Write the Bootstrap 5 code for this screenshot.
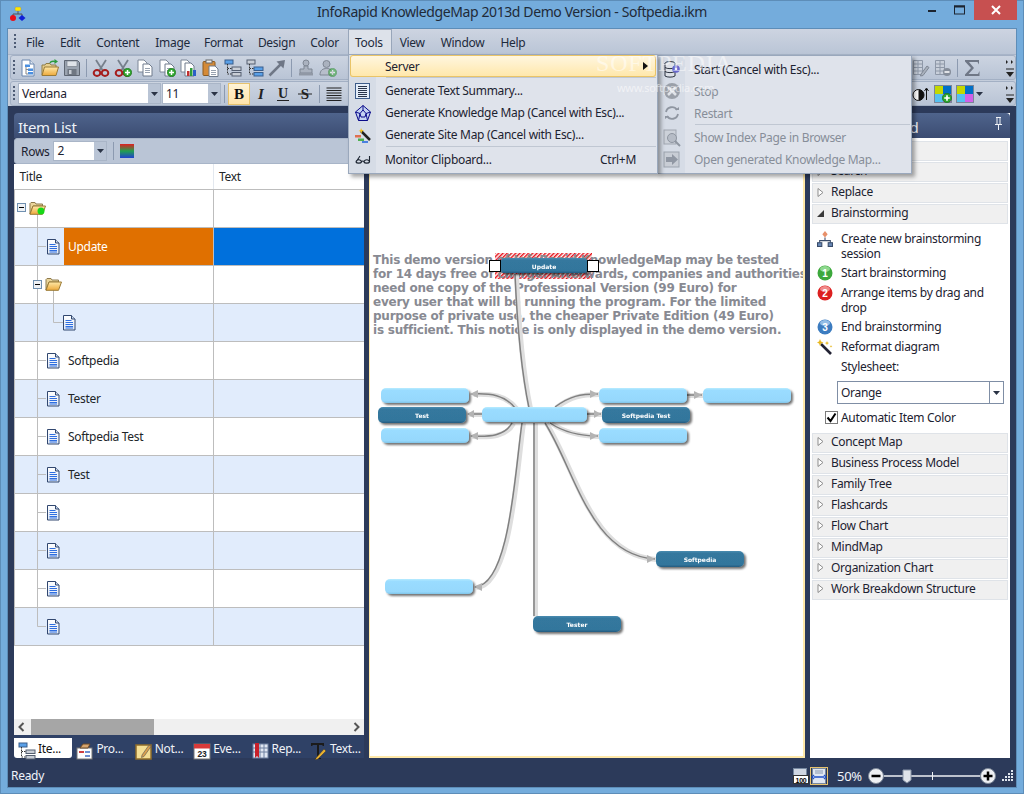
<!DOCTYPE html>
<html lang="en">
<head>
<meta charset="utf-8">
<title>InfoRapid KnowledgeMap</title>
<link href="https://cdn.jsdelivr.net/npm/bootstrap@5.3.0/dist/css/bootstrap.min.css" rel="stylesheet">
<style>
html,body{margin:0;width:1024px;height:794px;overflow:hidden;background:#74acdc}
body{font-family:"Noto Sans","Liberation Sans",sans-serif;font-size:12px;line-height:15px;color:#1c2230;letter-spacing:-.3px}
.appwin{width:1024px;height:794px;background:#74acdc;box-shadow:inset 0 0 0 1px #5d8db8}
.titlerow{height:29px;flex:none;font-size:14px;color:#1f2a38;padding-top:4px;letter-spacing:-.4px}
.appicon{left:9px;top:6px}
.winctl{right:7px;top:0;height:20px}
.winclose{width:43px;height:20px;background:#c75050}
.winbtn{width:28px;height:20px}
.innerwin{margin:0 8px 7px 8px;flex:1;min-height:0;background:#2c3a5a;box-shadow:0 0 0 1px #5d8db8}
.menurow{height:26px;flex:none;background:linear-gradient(#cdd4e1,#bac5d6);padding-left:6px;border-bottom:1px solid #a7b4c8}
.gripdots{width:2px;height:16px;margin-right:2px;flex:none;background:repeating-linear-gradient(#4e5c75 0 2px,transparent 2px 4px)}
.menutext{padding:2px 8px 0;color:#1d2a3c;line-height:22px;height:24px;white-space:nowrap}
.menutext:nth-child(5){margin-right:-2px}
.menutext:nth-child(6),.menutext:nth-child(7){margin-right:-1px}
.menutext.menuopen{background:#dde2ea;box-shadow:0 0 0 1px #98a6ba;margin:0 1px 0 2px;padding-left:6px}
.toolzone{flex:none;background:#c4cddb;padding:0 0 0 2px}
.toolrow{height:25px;background:linear-gradient(#ccd4e1,#b9c4d5);border:1px solid #a3b0c4;border-radius:3px;padding:0 0 0 2px}
.toolrow+.toolrow{margin-top:1px}
.tbtn{width:22px;height:22px;padding:0;border:0;border-radius:0;flex:none;display:flex;align-items:center;justify-content:center;color:#1c2230}
.tbtn svg{display:block}
.tbtn.onbtn{background:linear-gradient(#fff4d8,#ffe3a8);box-shadow:inset 0 0 0 1px #e6c26e}
.tsep{width:1px;height:18px;background:#8c9ab0;margin:0 3px;flex:none}
.rightchev{width:10px;margin-left:22px}
.combo{background:#fff;border:1px solid #a9b5c7;height:21px;line-height:19px;padding-left:3px;flex:none;font-size:12px;position:relative}
.comboarr{position:absolute;right:0;top:0;bottom:0;width:12px;background:#b9c4d5;display:flex;align-items:center;justify-content:center}
.comboarr svg{display:block}
.combofont{width:143px;margin-left:1px}
.combosize{width:59px;margin-left:1px}
.workzone{flex:1;min-height:0;padding:7px 6px 7px 6px;gap:5px}
.leftpane{width:350px;flex:none;min-height:0}
.panehead{height:25px;flex:none;background:linear-gradient(#4f648c,#3b4c72);color:#eef2f8;font-size:15px;line-height:29px;padding-left:4px;border-radius:4px 4px 0 0}
.panetools{height:26px;flex:none;background:#bac5d6;padding-left:6px;gap:3px;border:1px solid #a8b5c8;border-radius:3px}
.combotiny{width:54px;height:20px;line-height:18px;margin-left:1px}
.gridwrap{flex:1;min-height:0;background:#fff}
.treegrid{table-layout:fixed;width:350px;margin:0;font-size:12px}
.treegrid>thead>tr>th{font-weight:400;height:25px;padding:0 0 0 5px;background:#fff;border:0;border-bottom:1px solid #bdbdbd;vertical-align:middle;line-height:25px}
.treegrid>thead>tr>th:first-child{border-right:1px solid #e3e8ef;width:199px;padding-left:5px}
.treegrid>tbody>tr>td{height:38px;padding:0;border:0;border-bottom:1px solid #bdbdbd;background:#fff;box-shadow:none}
.treegrid>tbody>tr>td:first-child{border-right:1px solid #bdbdbd;border-left:1px solid #bdbdbd}
.treegrid>tbody>tr.altrow>td{background:#e1ecfc}
.treegrid>tbody>tr>td.cellblue{background:#0070dc}
.cellbox{height:37px;display:flex;align-items:center}
.cellbox svg{flex:none;display:block}
.cellorange{align-self:stretch;flex:1;background:#e07000;color:#fff;display:flex;align-items:center;padding-left:4px}
.hbar{height:16px;flex:none;background:#f0f0f0}
.hthumb{width:123px;background:#a6a6a6;height:16px;margin-left:1px}
.tabstrip{height:23px;flex:none;background:#2f4166;padding-top:3px}
.tabcell{width:58.4px;height:20px;flex:none;color:#f0f3f8;padding-left:4px;gap:2px;white-space:nowrap;font-size:12px;line-height:21px}
.tabcell.tabon{background:#fff;color:#111;border-radius:0 0 3px 3px}
.midpane{width:436px;flex:none;border-right:2px solid #ffe8a8;border-bottom:2px solid #ffe8a8;border-left:1px solid #ffe8a8;background:#fff;overflow:hidden}
.midpane svg{display:block}
.rightpane{width:200px;flex:none;background:#fff;min-height:0}
.wizhead{height:25px;flex:none;background:linear-gradient(#4f648c,#3b4c72);color:#eef2f8;font-size:15px;line-height:29px;padding:0 7px 0 4px;border-radius:0 4px 0 0}
.wizlist{padding:3px 2px 0 2px}
.wizitem{height:20px;margin-bottom:1px;border:1px solid #dfe3e8;background:#f0f0f0;line-height:18px;padding:0 0 2px 4px;gap:7px;border-radius:0;color:#1c2230}
.wizitem svg{flex:none}
.wizbody{padding:5.500px 0 0 7px;height:207.500px;flex:none}
.wizbody+.wizlist{padding-top:0}
.wizline{gap:8px;padding-right:8px;margin-bottom:4px}
.wizline svg{flex:none}
.wizsub{padding-left:24px;margin-bottom:7.500px;margin-top:3.500px}
.wizcombo{width:167px;height:23px;margin-left:20px;border:1px solid #7f8ea5;display:flex;background:#fff;line-height:21px;padding-left:3px}
.wizcombo span:first-child{flex:1}
.wizarr{width:14px;border-left:1px solid #7f8ea5;display:flex;align-items:center;justify-content:center}
.wizcheck{gap:3px;padding-left:8px;margin-top:6px}
.checkmark{width:13px;height:13px;border:1px solid #7b7b7b;background:#fff;display:flex;flex:none}
.statusrow{height:22px;flex:none;color:#f0f4fa;padding-left:3px;padding-right:2px;line-height:22px}
.stbtn{width:18px;height:18px;display:flex;align-items:center;justify-content:center;flex:none}
.stbtn.onbtn{box-shadow:inset 0 0 0 1px #e6c26e}
.zoompct{width:29px;font-size:13px;margin-left:9px;flex:none}
.toolspop{position:absolute;left:348px;top:54px;width:310px;height:120px;margin:0;padding:0 1px;background:linear-gradient(90deg,#d6dce6 27px,#dfe3eb 27px);border:1px solid #9aa8bc;border-radius:0;box-shadow:3px 3px 4px rgba(0,0,0,.35);display:block;font-size:12px;z-index:5;min-width:0}
.serverpop{position:absolute;left:657px;top:55px;width:255px;height:119px;margin:0;padding:2px 1px 1px;background:linear-gradient(90deg,#d6dce6 27px,#dfe3eb 27px);border:1px solid #9aa8bc;border-radius:0;box-shadow:3px 3px 4px rgba(0,0,0,.35);display:block;font-size:12px;z-index:4;min-width:0}
.popitem{height:22px;padding:0;display:flex;align-items:center;color:#1c2230;background:none;position:relative}
.popitem.hiitem{background:linear-gradient(#fff7e2,#ffe7a9);box-shadow:inset 0 0 0 1px #e9c468;border-radius:3px}
.popitem.offitem{color:#878e99}
.popicon{width:26px;flex:none;display:flex;justify-content:center}
.poptext{padding-left:9px;flex:1;white-space:nowrap}
.popkey{padding-right:20px}
.popsep{height:2.500px;margin:0 0 0 36px;border:0;border-top:1px solid #c0c7d2;opacity:1;background:none}
.wmark{position:absolute;left:596px;top:49px;z-index:6;color:rgba(255,255,255,.5);font-family:"Liberation Serif",serif;font-size:24px;line-height:28px;letter-spacing:.8px;pointer-events:none}
.wmark2{position:absolute;left:617px;top:81px;z-index:6;color:rgba(255,255,255,.55);font-size:11px;line-height:14px;pointer-events:none}
.maptext{font-family:"DejaVu Sans",Verdana,sans-serif;font-weight:700;font-size:12px;fill:#888a92;letter-spacing:-.23px}
.nodelabel{font-family:"DejaVu Sans",sans-serif;font-weight:700;font-size:6px;fill:#fff;text-anchor:middle;letter-spacing:0}
.sliderbar{width:130px;height:18px;flex:none}
</style>
</head>
<body>
<svg width="0" height="0" class="position-absolute">
<defs>
<linearGradient id="docfill" x1="0" y1="0" x2="0" y2="1"><stop offset="0" stop-color="#fff"/><stop offset="1" stop-color="#dfe8f6"/></linearGradient>
<linearGradient id="foldfill" x1="0" y1="0" x2="0" y2="1"><stop offset="0" stop-color="#ffe9a8"/><stop offset="1" stop-color="#eda93b"/></linearGradient>
<symbol id="doc" viewBox="0 0 14 16"><path d="M1.5.5h8l3.5 3.5v11H1.5z" fill="url(#docfill)" stroke="#31476f"/><path d="M9.5.5V4H13" fill="#c8d6ea" stroke="#31476f"/><path d="M3.5 5.5h6M3.5 7.5h7.5M3.5 9.5h7.5M3.5 11.5h7.5M3.5 13h7.5" stroke="#2f6fe0" fill="none"/></symbol>
<symbol id="folder" viewBox="0 0 17 14"><path d="M1 13V2.5L2 1.5h4l1 1.5h6.5V5H4L1 13z" fill="#e9d49a" stroke="#8e7a4c"/><path d="M1 13.3 4 5h12.5l-3 8.3z" fill="url(#foldfill)" stroke="#9a7a35"/></symbol>
<symbol id="minusbox" viewBox="0 0 9 9"><rect x=".5" y=".5" width="8" height="8" fill="#eef1f5" stroke="#7090b0"/><path d="M2 4.5h5" stroke="#000"/></symbol>
<symbol id="chev" viewBox="0 0 10 22"><path d="M1 3 3 5 1 7zM6 3l2 2-2 2z" fill="#222"/><path d="M1 12h8" stroke="#222"/><path d="M1 15h8l-4 5z" fill="#222"/></symbol>
<symbol id="darr" viewBox="0 0 7 4"><path d="M0 0h7L3.5 4z" fill="#2a3345"/></symbol>
<symbol id="tri" viewBox="0 0 7 9"><path d="M1 .5 6 4.5 1 8.500z" fill="#fff" stroke="#8d8d8d"/></symbol>
<symbol id="tridown" viewBox="0 0 7 7"><path d="M7 0v7H0z" fill="#3a3a3a"/></symbol>
<symbol id="plusgreen" viewBox="0 0 9 9"><circle cx="4.5" cy="4.500" r="4.200" fill="#2fa62f" stroke="#1b6f1b" stroke-width=".6"/><path d="M2 4.500h5M4.500 2v5" stroke="#fff" stroke-width="1.500"/></symbol>
<symbol id="i-new" viewBox="0 0 18 18"><path d="M3 1h8l4 4v12H3z" fill="#fff" stroke="#6a86ad"/><path d="M11 1v4h4" fill="#dfe7f2" stroke="#6a86ad"/><rect x="6" y="5.500" width="5" height="2.500" fill="#4b8fe0"/><rect x="9" y="9.500" width="5" height="2.500" fill="#4b8fe0"/><rect x="9" y="13" width="5" height="2.500" fill="#4b8fe0"/><path d="M7 8v7h2M7 10.500h2" stroke="#888" fill="none"/></symbol>
<symbol id="i-open" viewBox="0 0 18 18"><path d="M1 16V6h3l1-1.500h4L10 6h5v2" fill="#e7cf8e" stroke="#8f7c47"/><path d="M1 16.500 3.500 8H17.500l-2.500 8.500z" fill="url(#foldfill)" stroke="#9a7a35"/><path d="M9 4C10 2 12 2 14 2.500" stroke="#2b9a3e" stroke-width="1.500" fill="none"/><path d="M13.500 0 17 2.500 13.500 5z" fill="#2b9a3e"/></symbol>
<symbol id="i-save" viewBox="0 0 18 18"><path d="M1.500 1.500h13l2 2v13h-15z" fill="#9aa3af" stroke="#5e6672"/><rect x="4" y="2" width="10" height="5.500" fill="#dfe3e8" stroke="#6d7580" stroke-width=".6"/><rect x="4.500" y="10" width="9" height="6" fill="#6f7782"/><rect x="6" y="11" width="2.500" height="4" fill="#c8cdd4"/></symbol>
<symbol id="i-cut" viewBox="0 0 18 18"><path d="M4 1 11 12M14 1 7 12" stroke="#77808c" stroke-width="1.800"/><ellipse cx="5" cy="14" rx="3.300" ry="3" fill="none" stroke="#a51d1d" stroke-width="2"/><ellipse cx="13" cy="14" rx="3.300" ry="3" fill="none" stroke="#a51d1d" stroke-width="2"/></symbol>
<symbol id="i-copy" viewBox="0 0 18 18"><path d="M2 1h6l3 3v9H2z" fill="#fff" stroke="#7c8797"/><path d="M7 5h6l3 3v9H7z" fill="#fff" stroke="#6f7b8c"/><path d="M9 9.500h5M9 11.500h5M9 13.500h5" stroke="#98a2b0"/></symbol>
<symbol id="i-chart" viewBox="0 0 18 18"><path d="M1 1h6l3 3v9H1z" fill="#fff" stroke="#7c8797"/><path d="M5 4h6l3 3v10H5z" fill="#fff" stroke="#6f7b8c"/><rect x="7" y="12" width="2.500" height="5" fill="#c03030"/><rect x="10" y="9" width="2.500" height="8" fill="#2d9d3a"/><rect x="13" y="11" width="3" height="6" fill="#2c5fc8"/></symbol>
<symbol id="i-paste" viewBox="0 0 18 18"><rect x="1" y="2.500" width="12" height="14" rx="1" fill="#d48a38" stroke="#8b5a20"/><rect x="4" y="1" width="6" height="3" fill="#eee" stroke="#666"/><path d="M7 7h6l3 3v7.500H7z" fill="#fff" stroke="#6f7b8c"/><path d="M9 11.500h5M9 13.500h5M9 15.500h5" stroke="#98a2b0"/></symbol>
<symbol id="i-tree" viewBox="0 0 18 18"><rect x="1" y="1" width="8" height="4" fill="#59a0e8" stroke="#3a5f8d"/><rect x="8" y="8" width="9" height="3.500" fill="#c9ced6" stroke="#555f70"/><rect x="8" y="13.500" width="9" height="3.500" fill="#c9ced6" stroke="#555f70"/><path d="M3.500 5v10h4M3.500 9.500h4" stroke="#333" fill="none" stroke-dasharray="1.500 1"/></symbol>
<symbol id="i-tree2" viewBox="0 0 18 18"><rect x="1" y="1" width="8" height="4" fill="#c9ced6" stroke="#555f70"/><rect x="8" y="8" width="9" height="3.500" fill="#59a0e8" stroke="#3a5f8d"/><rect x="8" y="13.500" width="9" height="3.500" fill="#59a0e8" stroke="#3a5f8d"/><path d="M3.500 5v10h4M3.500 9.500h4" stroke="#333" fill="none" stroke-dasharray="1.500 1"/></symbol>
<symbol id="i-arrow" viewBox="0 0 18 18"><path d="M1.500 16.500 14 4" stroke="#6f7786" stroke-width="2.500"/><path d="M8.500 2.500 17 1l-1.500 8.500z" fill="#6f7786"/></symbol>
<symbol id="i-stamp" viewBox="0 0 18 18"><circle cx="9" cy="4" r="3" fill="#aab2bf" stroke="#7f8794"/><path d="M7 7h4v3h4v4H3v-4h4z" fill="#aab2bf" stroke="#7f8794"/><rect x="2" y="14" width="14" height="2.500" fill="#9098a5"/></symbol>
<symbol id="i-person" viewBox="0 0 18 18"><circle cx="7.500" cy="5" r="3.500" fill="#aab2bf" stroke="#7f8794"/><path d="M1 16c0-5 3-6.500 6.500-6.500S14 11 14 16z" fill="#b7becb" stroke="#7f8794"/></symbol>
<symbol id="i-tbl1" viewBox="0 0 18 18"><path d="M1.500 1.500h9v14h-9zM6 1.500v14M1.500 5h9M1.500 8.500h9M1.500 12h9" fill="#c8cfda" stroke="#8e98a8"/><path d="M9 15l6-8 2 1.500-6 8-2.500.5z" fill="#a9b1bd" stroke="#7f8794"/></symbol>
<symbol id="i-tbl2" viewBox="0 0 18 18"><path d="M1.500 1.500h9v14h-9zM6 1.500v14M1.500 5h9M1.500 8.500h9M1.500 12h9" fill="#c8cfda" stroke="#8e98a8"/><circle cx="13" cy="13" r="4" fill="#858d9a"/><path d="M10.500 13h5" stroke="#fff" stroke-width="1.500"/></symbol>
<symbol id="i-sigma" viewBox="0 0 18 18"><path d="M2 1h14v4.500L14.500 3H6l5 6-5.500 6H15l1.500-3V17H2v-1.500L8 9 2 2.500z" fill="#6f7786"/></symbol>
<symbol id="i-contrast" viewBox="0 0 18 18"><circle cx="6.500" cy="10" r="5.500" fill="#fff" stroke="#111"/><path d="M6.500 4.500a5.500 5.500 0 0 1 0 11z" fill="#111"/><path d="M14.500 15V4M12.500 6l2-3 2 3" stroke="#111" fill="none"/></symbol>
<symbol id="i-colors" viewBox="0 0 18 18"><rect x="1" y="1" width="8" height="8" fill="#c4d800"/><rect x="9" y="1" width="8" height="8" fill="#0070c8"/><rect x="1" y="9" width="8" height="8" fill="#55c0f0"/><rect x="9" y="9" width="8" height="8" fill="#d060e8"/><rect x=".5" y=".5" width="17" height="17" fill="none" stroke="#7b8699"/></symbol>
<symbol id="i-lines" viewBox="0 0 16 14"><path d="M.5 1h15M.5 3.500h15M.5 6h15M.5 8.500h15M.5 11h15M.5 13.500h15" stroke="#222"/></symbol>
<symbol id="i-summary" viewBox="0 0 16 16"><rect x=".5" y=".5" width="14" height="15" fill="#e4edf9" stroke="#3d5c8a"/><path d="M3 3.500h9M3 5.500h9M3 7.500h9M3 9.500h9M3 11.500h9M3 13.500h9" stroke="#29344a"/></symbol>
<symbol id="i-pent" viewBox="0 0 16 16"><path d="M8 .5 15.500 7 12.500 15.500h-9L.5 7z" fill="#c5d4f2" stroke="#0a0a8a"/><path d="M8 .5 8 5M.5 7 5 8.500 3.500 15.500M15.500 7 11 8.500 12.500 15.500M5 8.500 8 5 11 8.500 10 12H6z" fill="none" stroke="#0a0a8a"/></symbol>
<symbol id="i-wand" viewBox="0 0 16 16"><rect x="0" y="8" width="6" height="2.500" fill="#e07050"/><rect x="3" y="11.500" width="6" height="2.500" fill="#4fb04f"/><rect x="7" y="14" width="6" height="2" fill="#4a80e0"/><path d="M6 4l9 9" stroke="#222" stroke-width="2.500"/><path d="M6 1l1 2 2 .5-2 1-.5 2-1-2-2-.5 2-1z" fill="#f0c020"/></symbol>
<symbol id="i-glasses" viewBox="0 0 16 10"><path d="M1 8c.5-3 5-3 5.500 0-.5 1.500-5 1.500-5.500 0zM9 8c.5-3 5-3 5.500 0-.5 1.500-5 1.500-5.500 0zM6.500 7.500c.7-.5 1.800-.5 2.500 0M1 8 5 2M14.500 8 14.500 2" fill="none" stroke="#1b2330" stroke-width="1.100"/></symbol>
<symbol id="i-server" viewBox="0 0 18 18"><ellipse cx="7" cy="3.500" rx="5" ry="2" fill="#dfe3ea" stroke="#2c3340"/><path d="M2 3.500v12.500c2 1.500 8 1.500 10 0V3.500" fill="#dde1e8" stroke="#2c3340"/><path d="M2 7.500c2 1.500 8 1.500 10 0M2 11.500c2 1.500 8 1.500 10 0" fill="none" stroke="#2c3340"/><circle cx="13" cy="9" r="3.800" fill="#6666cc"/><circle cx="13" cy="9" r="1.200" fill="#e8e8ff"/></symbol>
<symbol id="i-stop" viewBox="0 0 18 18"><circle cx="9" cy="9" r="8" fill="#9aa0a9"/><path d="M5 5l8 8M13 5l-8 8" stroke="#dfe3e8" stroke-width="2.500"/></symbol>
<symbol id="i-restart" viewBox="0 0 18 18"><path d="M3 8a6 6 0 0 1 11-2M15 10a6 6 0 0 1-11 2" fill="none" stroke="#8f96a1" stroke-width="1.800"/><path d="M12 6h4V3zM6 12H2v3z" fill="#8f96a1"/></symbol>
<symbol id="i-magpage" viewBox="0 0 18 18"><rect x="1" y="1" width="12" height="14" fill="#ccd1d9" stroke="#a0a6b0"/><circle cx="9" cy="9" r="4.500" fill="#b6bcc6" stroke="#8f96a1"/><path d="M12 12l5 5" stroke="#8f96a1" stroke-width="2"/></symbol>
<symbol id="i-opengen" viewBox="0 0 18 18"><rect x="1" y="1" width="15" height="15" fill="#c8cdd5" stroke="#9ca3ae"/><path d="M3 6h6V3l6 5.500-6 5.500v-3H3z" fill="#9097a3"/></symbol>
<symbol id="i-org" viewBox="0 0 15 15"><path d="M7.500 0 10 3 7.500 6 5 3z" fill="#e8906a"/><path d="M7.500 6v3M2.500 11V9h10v2" fill="none" stroke="#3a4c6a"/><rect x=".500" y="11" width="4" height="3.500" fill="#6a8ab8" stroke="#3a4c6a"/><rect x="10.500" y="11" width="4" height="3.500" fill="#6a8ab8" stroke="#3a4c6a"/></symbol>
<symbol id="i-wand2" viewBox="0 0 16 16"><path d="M4 5l10 10" stroke="#223" stroke-width="2.600"/><path d="M3 0l1 2.500 2.500 1-2.500 1L3 7 2 4.500 0 3.500l2-1z" fill="#e8b820"/><path d="M10 2l.6 1.500 1.500.6-1.500.6-.6 1.500-.6-1.500-1.500-.6 1.500-.6zM14 6l.4 1 1 .4-1 .4-.4 1-.4-1-1-.4 1-.4z" fill="#e8b820"/></symbol>
</defs>
</svg>

<div class="appwin d-flex flex-column position-relative">
  <div class="titlerow d-flex justify-content-center position-relative">
    <svg class="appicon position-absolute" width="18" height="18" viewBox="0 0 18 18"><path d="M9 5v3M4 10V8h9v2" fill="none" stroke="#555"/><rect x="6" y="1" width="6" height="4" rx="1" fill="#ffe800" stroke="#888" stroke-width=".5"/><circle cx="4" cy="12" r="3" fill="#e8101a"/><path d="M13 9l3.500 3-3.500 3-3.500-3z" fill="#1020d8"/></svg>
    <span>InfoRapid KnowledgeMap 2013d Demo Version - Softpedia.ikm</span>
    <div class="winctl position-absolute d-flex">
      <div class="winbtn d-flex align-items-center justify-content-center"><svg width="9" height="3"><rect width="8" height="2" y="1" fill="#1c2430"/></svg></div>
      <div class="winbtn d-flex align-items-center justify-content-center"><svg width="12" height="10"><rect x=".5" y="1" width="10" height="8" fill="none" stroke="#1c2430"/><rect x="0" y=".5" width="11" height="2" fill="#1c2430"/></svg></div>
      <div class="winclose d-flex align-items-center justify-content-center"><svg width="10" height="10"><path d="M1 1l8 8M9 1l-8 8" stroke="#fff" stroke-width="2"/></svg></div>
    </div>
  </div>

  <div class="innerwin d-flex flex-column">
    <nav class="menurow d-flex align-items-center">
      <span class="gripdots"></span>
      <span class="menutext">File</span><span class="menutext">Edit</span><span class="menutext">Content</span><span class="menutext">Image</span><span class="menutext">Format</span><span class="menutext">Design</span><span class="menutext">Color</span><span class="menutext menuopen">Tools</span><span class="menutext">View</span><span class="menutext">Window</span><span class="menutext">Help</span>
    </nav>
    <div class="toolzone">
      <div class="toolrow btn-toolbar flex-nowrap align-items-center">
        <span class="gripdots"></span>
        <button class="btn tbtn"><svg width="18" height="18"><use href="#i-new"/></svg></button>
        <button class="btn tbtn"><svg width="18" height="18"><use href="#i-open"/></svg></button>
        <button class="btn tbtn"><svg width="18" height="18"><use href="#i-save"/></svg></button>
        <span class="tsep"></span>
        <button class="btn tbtn"><svg width="18" height="18"><use href="#i-cut"/></svg></button>
        <button class="btn tbtn position-relative"><svg width="18" height="18"><use href="#i-cut"/><use href="#plusgreen" x="9" y="9" width="9" height="9"/></svg></button>
        <button class="btn tbtn"><svg width="18" height="18"><use href="#i-copy"/></svg></button>
        <button class="btn tbtn"><svg width="18" height="18"><use href="#i-copy"/><use href="#plusgreen" x="9" y="9" width="9" height="9"/></svg></button>
        <button class="btn tbtn"><svg width="18" height="18"><use href="#i-chart"/></svg></button>
        <button class="btn tbtn"><svg width="18" height="18"><use href="#i-paste"/></svg></button>
        <button class="btn tbtn"><svg width="18" height="18"><use href="#i-tree"/></svg></button>
        <button class="btn tbtn"><svg width="18" height="18"><use href="#i-tree2"/></svg></button>
        <button class="btn tbtn"><svg width="18" height="18"><use href="#i-arrow"/></svg></button>
        <span class="tsep"></span>
        <button class="btn tbtn"><svg width="18" height="18"><use href="#i-stamp"/></svg></button>
        <button class="btn tbtn"><svg width="18" height="18"><use href="#i-person"/><use href="#plusgreen" x="9" y="9" width="9" height="9" opacity=".55"/></svg></button>
        <span class="ms-auto d-flex align-items-center">
          <button class="btn tbtn"><svg width="18" height="18"><use href="#i-tbl1"/></svg></button>
          <button class="btn tbtn"><svg width="18" height="18"><use href="#i-tbl2"/></svg></button>
          <span class="tsep"></span>
          <button class="btn tbtn"><svg width="18" height="18"><use href="#i-sigma"/></svg></button>
          <svg class="rightchev" width="10" height="22"><use href="#chev"/></svg>
        </span>
      </div>
      <div class="toolrow btn-toolbar flex-nowrap align-items-center">
        <span class="gripdots"></span>
        <div class="combo combofont">Verdana<span class="comboarr"><svg width="7" height="4"><use href="#darr"/></svg></span></div>
        <div class="combo combosize">11<span class="comboarr"><svg width="7" height="4"><use href="#darr"/></svg></span></div>
        <span class="tsep"></span>
        <button class="btn tbtn onbtn"><svg width="16" height="16"><text x="8" y="13" text-anchor="middle" font-family="Liberation Serif" font-weight="700" font-size="15" fill="#111">B</text></svg></button>
        <button class="btn tbtn"><svg width="16" height="16"><text x="8" y="13" text-anchor="middle" font-family="Liberation Serif" font-weight="700" font-style="italic" font-size="15" fill="#222">I</text></svg></button>
        <button class="btn tbtn"><svg width="16" height="16"><text x="8" y="12" text-anchor="middle" font-family="Liberation Serif" font-weight="700" font-size="14" fill="#222">U</text><path d="M2 14.500h12" stroke="#222"/></svg></button>
        <button class="btn tbtn"><svg width="16" height="16"><text x="8" y="13" text-anchor="middle" font-family="Liberation Serif" font-weight="700" font-size="15" fill="#222">S</text><path d="M1 8h14" stroke="#222"/></svg></button>
        <span class="tsep"></span>
        <button class="btn tbtn"><svg width="16" height="14"><use href="#i-lines"/></svg></button>
        <span class="ms-auto d-flex align-items-center">
          <button class="btn tbtn"><svg width="18" height="18"><use href="#i-contrast"/></svg></button>
          <button class="btn tbtn"><svg width="18" height="18"><use href="#i-colors"/><use href="#plusgreen" x="8" y="8" width="10" height="10"/></svg></button>
          <button class="btn tbtn"><svg width="18" height="18"><use href="#i-colors"/></svg></button>
          <svg width="7" height="4"><use href="#darr"/></svg>
          <svg class="rightchev" width="10" height="22"><use href="#chev"/></svg>
        </span>
      </div>
    </div>

    <div class="workzone d-flex">
      <section class="leftpane d-flex flex-column">
        <div class="panehead">Item List</div>
        <div class="panetools d-flex align-items-center">
          <span>Rows</span>
          <div class="combo combotiny">2<span class="comboarr"><svg width="7" height="4"><use href="#darr"/></svg></span></div>
          <span class="tsep"></span>
          <svg width="14" height="14"><defs><linearGradient id="rgb" x1="0" y1="0" x2="0" y2="1"><stop offset="0" stop-color="#e02020"/><stop offset=".5" stop-color="#20a050"/><stop offset="1" stop-color="#2040d0"/></linearGradient></defs><rect width="14" height="14" fill="url(#rgb)"/></svg>
        </div>
        <div class="gridwrap">
          <table class="table treegrid">
            <thead><tr><th>Title</th><th>Text</th></tr></thead>
            <tbody>
              <tr><td><div class="cellbox"><svg width="49" height="37"><path d="M22.500 24V37" stroke="#bdbdbd"/><use href="#minusbox" x="2" y="13" width="9" height="9"/><use href="#folder" x="14" y="11" width="17" height="14"/><circle cx="26" cy="21" r="3.500" fill="#18d818"/></svg></div></td><td></td></tr>
              <tr class="altrow"><td><div class="cellbox"><svg width="49" height="37"><path d="M22.500 0V37M22.500 18.500H31" stroke="#bdbdbd"/><use href="#doc" x="31" y="11" width="14" height="16"/></svg><span class="cellorange">Update</span></div></td><td class="cellblue"></td></tr>
              <tr><td><div class="cellbox"><svg width="49" height="37"><path d="M22.500 0V37M38.500 24V37" stroke="#bdbdbd"/><use href="#minusbox" x="18" y="14" width="9" height="9"/><use href="#folder" x="30" y="11" width="17" height="14"/></svg></div></td><td></td></tr>
              <tr class="altrow"><td><div class="cellbox"><svg width="64" height="37"><path d="M22.500 0V37M38.500 0V18.500H48" fill="none" stroke="#bdbdbd"/><use href="#doc" x="47" y="11" width="14" height="16"/></svg></div></td><td></td></tr>
              <tr><td><div class="cellbox gap-1"><svg width="49" height="37"><path d="M22.500 0V37M22.500 18.500H31" stroke="#bdbdbd"/><use href="#doc" x="31" y="11" width="14" height="16"/></svg><span>Softpedia</span></div></td><td></td></tr>
              <tr class="altrow"><td><div class="cellbox gap-1"><svg width="49" height="37"><path d="M22.500 0V37M22.500 18.500H31" stroke="#bdbdbd"/><use href="#doc" x="31" y="11" width="14" height="16"/></svg><span>Tester</span></div></td><td></td></tr>
              <tr><td><div class="cellbox gap-1"><svg width="49" height="37"><path d="M22.500 0V37M22.500 18.500H31" stroke="#bdbdbd"/><use href="#doc" x="31" y="11" width="14" height="16"/></svg><span>Softpedia Test</span></div></td><td></td></tr>
              <tr class="altrow"><td><div class="cellbox gap-1"><svg width="49" height="37"><path d="M22.500 0V37M22.500 18.500H31" stroke="#bdbdbd"/><use href="#doc" x="31" y="11" width="14" height="16"/></svg><span>Test</span></div></td><td></td></tr>
              <tr><td><div class="cellbox"><svg width="49" height="37"><path d="M22.500 0V37M22.500 18.500H31" stroke="#bdbdbd"/><use href="#doc" x="31" y="11" width="14" height="16"/></svg></div></td><td></td></tr>
              <tr class="altrow"><td><div class="cellbox"><svg width="49" height="37"><path d="M22.500 0V37M22.500 18.500H31" stroke="#bdbdbd"/><use href="#doc" x="31" y="11" width="14" height="16"/></svg></div></td><td></td></tr>
              <tr><td><div class="cellbox"><svg width="49" height="37"><path d="M22.500 0V37M22.500 18.500H31" stroke="#bdbdbd"/><use href="#doc" x="31" y="11" width="14" height="16"/></svg></div></td><td></td></tr>
              <tr class="altrow"><td><div class="cellbox"><svg width="49" height="37"><path d="M22.500 0V18.500H31" fill="none" stroke="#bdbdbd"/><use href="#doc" x="31" y="11" width="14" height="16"/></svg></div></td><td></td></tr>
            </tbody>
          </table>
        </div>
        <div class="hbar d-flex align-items-center justify-content-between">
          <svg width="16" height="16"><path d="M9.500 4 5.500 8l4 4" fill="none" stroke="#555" stroke-width="2"/></svg>
          <div class="hthumb me-auto"></div>
          <svg width="16" height="16"><path d="M6.500 4l4 4-4 4" fill="none" stroke="#555" stroke-width="2"/></svg>
        </div>
        <div class="tabstrip d-flex">
          <div class="tabcell tabon d-flex"><svg width="18" height="18" class="mt-1"><use href="#i-tree"/></svg><span>Ite...</span></div>
          <div class="tabcell d-flex"><svg width="18" height="18" class="mt-1"><rect x="1" y="6" width="15" height="11" fill="#fff" stroke="#777"/><path d="M4 6l3-4h7l-2 4z" fill="#d6a56f" stroke="#6b4a2a"/><rect x="3" y="9" width="5" height="2" fill="#d04040"/><rect x="9" y="9" width="5" height="2" fill="#7090d0"/><rect x="9" y="13" width="5" height="2" fill="#7090d0"/></svg><span>Pro...</span></div>
          <div class="tabcell d-flex"><svg width="18" height="18" class="mt-1"><rect x="1" y="3" width="15" height="14" fill="#f4de94" stroke="#8f6c2a" stroke-width="1.500"/><path d="M7 13l7-10 2 1.500-7 10-2.500 1z" fill="#d9a050" stroke="#555" stroke-width=".6"/></svg><span>Not...</span></div>
          <div class="tabcell d-flex"><svg width="18" height="18" class="mt-1"><rect x="1" y="2" width="16" height="15" fill="#fff" stroke="#777"/><rect x="1" y="2" width="16" height="4.500" fill="#d83a3a"/><text x="9" y="15" text-anchor="middle" font-size="8.500" font-weight="700" font-family="Liberation Sans" fill="#222">23</text></svg><span>Eve...</span></div>
          <div class="tabcell d-flex"><svg width="18" height="18" class="mt-1"><rect x="1" y="2" width="15" height="14" fill="#dfe6f2" stroke="#6f80a0"/><path d="M8 2v14M12 2v14M1 6h15M1 10h15" stroke="#6f80a0"/><path d="M3 1h4v15l-2-2-2 2z" fill="#c8202a"/></svg><span>Rep...</span></div>
          <div class="tabcell d-flex"><svg width="18" height="18" class="mt-1"><path d="M1 1h13v3h-1l-1-1H9v13h2v1H5v-1h2V3H3L2 4H1z" fill="#1b1b1b"/><path d="M6 16l8-9 2 2-8 8-3 1z" fill="#e8b030" stroke="#333" stroke-width=".5"/></svg><span>Text...</span></div>
        </div>
      </section>

      <main class="midpane position-relative">
        <svg width="433" height="643" viewBox="370 113 433 643">
          <defs>
            <pattern id="hatch" width="3" height="3" patternUnits="userSpaceOnUse" patternTransform="rotate(45)"><rect width="3" height="3" fill="#fff"/><rect width="1.500" height="3" fill="#e8141c"/></pattern>
            <linearGradient id="lightn" x1="0" y1="0" x2="0" y2="1"><stop offset="0" stop-color="#b8ecff"/><stop offset=".15" stop-color="#9adcff"/><stop offset=".85" stop-color="#96d8fc"/><stop offset="1" stop-color="#7fc4e8"/></linearGradient>
            <linearGradient id="darkn" x1="0" y1="0" x2="0" y2="1"><stop offset="0" stop-color="#4a8cb0"/><stop offset=".15" stop-color="#34789e"/><stop offset=".85" stop-color="#33769c"/><stop offset="1" stop-color="#245c80"/></linearGradient>
            <filter id="nshadow" x="-10%" y="-20%" width="125%" height="170%"><feDropShadow dx="2" dy="2" stdDeviation="1" flood-color="#000" flood-opacity=".55"/></filter>
            <symbol id="lnode" viewBox="0 0 88 15"><rect width="88" height="15" rx="5" fill="url(#lightn)"/></symbol>
          </defs>
          <rect x="495" y="253" width="97" height="26" fill="url(#hatch)"/>
          <g class="maptext">
            <text x="373" y="264">This demo version of InfoRapid KnowledgeMap may be tested</text>
            <text x="373" y="278">for 14 days free of charge. Afterwards, companies and authorities</text>
            <text x="373" y="292">need one copy of the Professional Version (99 Euro) for</text>
            <text x="373" y="306">every user that will be running the program. For the limited</text>
            <text x="373" y="320">purpose of private use, the cheaper Private Edition (49 Euro)</text>
            <text x="373" y="334">is sufficient. This notice is only displayed in the demo version.</text>
          </g>
          <g fill="none" stroke="#dedede" stroke-width="5" transform="translate(1.500 .5)">
            <path d="M515 274C517 320 521 370 529 408"/>
            <path d="M515 408C505 395 490 393 472 394"/>
            <path d="M512 423C505 436 490 437 471 436"/>
            <path d="M555 407C570 396 580 394 598 394"/>
            <path d="M550 423C565 433 580 436 598 436"/>
            <path d="M545 423C575 470 590 555 655 559"/>
            <path d="M522 423C515 470 510 585 475 587"/>
            <path d="M534 423V616"/>
            <path d="M482 414H468M587 414H601M687 395H702"/>
          </g>
          <g fill="none" stroke="#808080" stroke-width="1.500">
            <path d="M515 274C517 320 521 370 529 408"/>
            <path d="M515 408C505 395 490 393 472 394"/>
            <path d="M512 423C505 436 490 437 471 436"/>
            <path d="M555 407C570 396 580 394 598 394"/>
            <path d="M550 423C565 433 580 436 598 436"/>
            <path d="M545 423C575 470 590 555 655 559"/>
            <path d="M522 423C515 470 510 585 475 587"/>
            <path d="M534 423V616"/>
            <path d="M482 414H468M587 414H601M687 395H702"/>
          </g>
          <g fill="#b4b4b4">
            <path d="M470 394l8-4v8zM470 436l8-4v8zM467 414l7-4v8zM598 394l-8-4v8zM598 436l-8-4v8zM601 414l-7-4v8zM702 395l-8-4v8zM655 559l-8-4v8zM474 587l8-4v8z"/>
          </g>
          <g filter="url(#nshadow)">
            <use href="#lnode" x="381" y="388" width="88" height="15"/>
            <use href="#lnode" x="381" y="428" width="88" height="15"/>
            <rect x="482" y="407" width="105" height="15" rx="5" fill="url(#lightn)"/>
            <use href="#lnode" x="599" y="388" width="88" height="15"/>
            <use href="#lnode" x="703" y="388" width="88" height="15"/>
            <use href="#lnode" x="599" y="428" width="88" height="15"/>
            <use href="#lnode" x="385" y="579" width="88" height="15"/>
            <rect x="378" y="407" width="88" height="16" rx="5" fill="url(#darkn)"/>
            <rect x="602" y="407" width="88" height="16" rx="5" fill="url(#darkn)"/>
            <rect x="656" y="551" width="88" height="16" rx="5" fill="url(#darkn)"/>
            <rect x="533" y="616" width="88" height="16" rx="5" fill="url(#darkn)"/>
            <rect x="501" y="258" width="86" height="15" rx="3" fill="url(#darkn)"/>
          </g>
          <text class="nodelabel" x="422" y="418">Test</text>
          <text class="nodelabel" x="646" y="418">Softpedia Test</text>
          <text class="nodelabel" x="700" y="562">Softpedia</text>
          <text class="nodelabel" x="577" y="627">Tester</text>
          <text class="nodelabel" x="544" y="269">Update</text>
          <rect x="489.500" y="260.500" width="11" height="11" fill="#fff" stroke="#000"/>
          <rect x="587.500" y="260.500" width="11" height="11" fill="#fff" stroke="#000"/>
        </svg>
      </main>

      <aside class="rightpane d-flex flex-column">
        <div class="wizhead d-flex justify-content-between"><span>Content Wizard</span><svg width="9" height="14" class="mt-1"><path d="M2 .5h5M3 1v6M6 1v6M1 7.500h7M4.500 8v5" fill="none" stroke="#f0f3f8"/></svg></div>
        <div class="wizlist list-group">
          <div class="wizitem d-flex align-items-center"><svg width="7" height="9"><use href="#tri"/></svg><span>Insert</span></div>
          <div class="wizitem d-flex align-items-center"><svg width="7" height="9"><use href="#tri"/></svg><span>Search</span></div>
          <div class="wizitem d-flex align-items-center"><svg width="7" height="9"><use href="#tri"/></svg><span>Replace</span></div>
          <div class="wizitem d-flex align-items-center"><svg width="7" height="7"><use href="#tridown"/></svg><span>Brainstorming</span></div>
        </div>
        <div class="wizbody">
          <div class="wizline d-flex"><svg width="16" height="16"><use href="#i-org"/></svg><span>Create new brainstorming session</span></div>
          <div class="wizline d-flex"><svg width="16" height="16"><circle cx="8" cy="8" r="7.500" fill="#3ca83c"/><ellipse cx="8" cy="4" rx="5" ry="3" fill="#8ed88e"/><text x="8" y="12" text-anchor="middle" font-size="10" font-weight="700" font-family="Liberation Sans" fill="#fff">1</text></svg><span>Start brainstorming</span></div>
          <div class="wizline d-flex"><svg width="16" height="16"><circle cx="8" cy="8" r="7.500" fill="#dc2020"/><ellipse cx="8" cy="4" rx="5" ry="3" fill="#f08a8a"/><text x="8" y="12" text-anchor="middle" font-size="10" font-weight="700" font-family="Liberation Sans" fill="#fff">2</text></svg><span>Arrange items by drag and drop</span></div>
          <div class="wizline d-flex"><svg width="16" height="16"><circle cx="8" cy="8" r="7.500" fill="#3c7cc0"/><ellipse cx="8" cy="4" rx="5" ry="3" fill="#93bde6"/><text x="8" y="12" text-anchor="middle" font-size="10" font-weight="700" font-family="Liberation Sans" fill="#fff">3</text></svg><span>End brainstorming</span></div>
          <div class="wizline d-flex"><svg width="16" height="16"><use href="#i-wand2"/></svg><span>Reformat diagram</span></div>
          <div class="wizsub">Stylesheet:</div>
          <div class="wizcombo"><span>Orange</span><span class="wizarr"><svg width="7" height="4"><use href="#darr"/></svg></span></div>
          <div class="wizcheck d-flex align-items-center"><span class="checkmark"><svg width="11" height="11"><path d="M1.500 5.500 4.500 9 9.500 1.500" fill="none" stroke="#000" stroke-width="2"/></svg></span><span>Automatic Item Color</span></div>
        </div>
        <div class="wizlist list-group">
          <div class="wizitem d-flex align-items-center"><svg width="7" height="9"><use href="#tri"/></svg><span>Concept Map</span></div>
          <div class="wizitem d-flex align-items-center"><svg width="7" height="9"><use href="#tri"/></svg><span>Business Process Model</span></div>
          <div class="wizitem d-flex align-items-center"><svg width="7" height="9"><use href="#tri"/></svg><span>Family Tree</span></div>
          <div class="wizitem d-flex align-items-center"><svg width="7" height="9"><use href="#tri"/></svg><span>Flashcards</span></div>
          <div class="wizitem d-flex align-items-center"><svg width="7" height="9"><use href="#tri"/></svg><span>Flow Chart</span></div>
          <div class="wizitem d-flex align-items-center"><svg width="7" height="9"><use href="#tri"/></svg><span>MindMap</span></div>
          <div class="wizitem d-flex align-items-center"><svg width="7" height="9"><use href="#tri"/></svg><span>Organization Chart</span></div>
          <div class="wizitem d-flex align-items-center"><svg width="7" height="9"><use href="#tri"/></svg><span>Work Breakdown Structure</span></div>
        </div>
      </aside>
    </div>

    <footer class="statusrow d-flex align-items-center">
      <span>Ready</span>
      <span class="ms-auto d-flex align-items-center">
        <span class="stbtn"><svg width="16" height="16"><rect x=".5" y=".5" width="13" height="8" fill="#cfd6e2" stroke="#7788a0"/><rect x=".5" y="7.500" width="15" height="8" fill="#fff" stroke="#333"/><text x="8" y="14.500" text-anchor="middle" font-size="7" font-weight="700" font-family="Liberation Sans" fill="#000">100</text></svg></span>
        <span class="stbtn onbtn"><svg width="16" height="16"><rect x="1.500" y=".5" width="13" height="15" fill="#dfe6f2" stroke="#7788a0"/><path d="M3 9h10M3 7l-2 2 2 2M13 7l2 2-2 2" fill="none" stroke="#1f50c8" stroke-width="1.300"/><path d="M4 3h8M4 5h8" stroke="#8898b0"/></svg></span>
        <span class="zoompct">50%</span>
        <svg class="sliderbar" viewBox="0 0 130 18"><path d="M10 9H122" stroke="#eef1f5" stroke-width="1.500"/><path d="M66.500 5v8" stroke="#eef1f5"/><circle cx="10" cy="9" r="7.500" fill="#eef0f4" stroke="#7d8898"/><path d="M5.500 9h9" stroke="#000" stroke-width="2.500"/><circle cx="122" cy="9" r="7.500" fill="#eef0f4" stroke="#7d8898"/><path d="M117.500 9h9M122 4.500v9" stroke="#000" stroke-width="2.500"/><path d="M37 3h8v10l-4 3-4-3z" fill="#dfe3ea" stroke="#8995a8"/></svg>
        <svg width="14" height="14" viewBox="0 0 14 14" class="ms-1"><g fill="#dfe5ee"><rect x="11" y="1" width="2" height="2"/><rect x="8" y="4" width="2" height="2"/><rect x="11" y="4" width="2" height="2"/><rect x="5" y="7" width="2" height="2"/><rect x="8" y="7" width="2" height="2"/><rect x="11" y="7" width="2" height="2"/><rect x="2" y="10" width="2" height="2"/><rect x="5" y="10" width="2" height="2"/><rect x="8" y="10" width="2" height="2"/><rect x="11" y="10" width="2" height="2"/></g></svg>
      </span>
    </footer>
  </div>

  <div class="dropdown-menu toolspop">
    <div class="dropdown-item popitem hiitem"><span class="popicon"></span><span class="poptext">Server</span><svg width="5" height="8" class="me-2"><path d="M0 0l5 4-5 4z" fill="#111"/></svg></div>
    <hr class="popsep">
    <div class="dropdown-item popitem"><span class="popicon"><svg width="16" height="16"><use href="#i-summary"/></svg></span><span class="poptext">Generate Text Summary...</span></div>
    <div class="dropdown-item popitem"><span class="popicon"><svg width="16" height="16"><use href="#i-pent"/></svg></span><span class="poptext">Generate Knowledge Map (Cancel with Esc)...</span></div>
    <div class="dropdown-item popitem"><span class="popicon"><svg width="16" height="16"><use href="#i-wand"/></svg></span><span class="poptext">Generate Site Map (Cancel with Esc)...</span></div>
    <hr class="popsep">
    <div class="dropdown-item popitem"><span class="popicon"><svg width="16" height="10"><use href="#i-glasses"/></svg></span><span class="poptext">Monitor Clipboard...</span><span class="popkey">Ctrl+M</span></div>
  </div>
  <div class="dropdown-menu serverpop">
    <div class="dropdown-item popitem"><span class="popicon"><svg width="18" height="18"><use href="#i-server"/></svg></span><span class="poptext">Start (Cancel with Esc)...</span></div>
    <div class="dropdown-item popitem offitem"><span class="popicon"><svg width="18" height="18"><use href="#i-stop"/></svg></span><span class="poptext">Stop</span></div>
    <div class="dropdown-item popitem offitem"><span class="popicon"><svg width="18" height="18"><use href="#i-restart"/></svg></span><span class="poptext">Restart</span></div>
    <hr class="popsep">
    <div class="dropdown-item popitem offitem"><span class="popicon"><svg width="18" height="18"><use href="#i-magpage"/></svg></span><span class="poptext">Show Index Page in Browser</span></div>
    <div class="dropdown-item popitem offitem"><span class="popicon"><svg width="18" height="18"><use href="#i-opengen"/></svg></span><span class="poptext">Open generated Knowledge Map...</span></div>
  </div>
  <div class="wmark">SOFTPEDIA</div>
  <div class="wmark2">www.softpedia.com</div>
</div>
<script src="https://cdn.jsdelivr.net/npm/bootstrap@5.3.0/dist/js/bootstrap.bundle.min.js"></script>
</body>
</html>
